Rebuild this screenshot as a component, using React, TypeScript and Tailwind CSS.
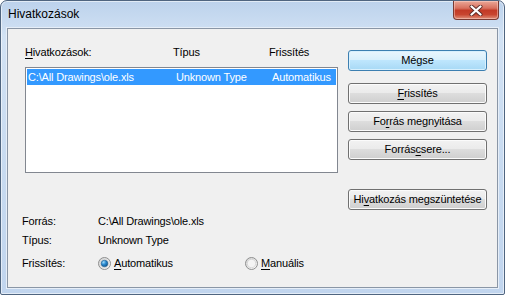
import type { ReactNode } from "react";

// mnemonic letter (underlined access key)
const U = ({ children }: { children: ReactNode }) => (
  <span className="underline underline-offset-[2px] decoration-[1px]">{children}</span>
);

function WinButton({ children, focused }: { children: ReactNode; focused?: boolean }) {
  return (
    <div
      className={
        focused
          ? "h-[21px] w-[139px] rounded-[3px] border border-[#3c7fb1] bg-[linear-gradient(#eaf6fd_0%,#d9f0fc_45%,#bee6fd_50%,#a7d9f5_100%)] shadow-[inset_0_0_0_1px_#d8f0fd] flex items-center justify-center text-black"
          : "h-[21px] w-[139px] rounded-[3px] border border-[#707070] bg-[linear-gradient(#f2f2f2_0%,#ebebeb_45%,#dddddd_50%,#cfcfcf_100%)] shadow-[inset_0_0_0_1px_#fbfbfb] flex items-center justify-center text-black"
      }
    >
      {children}
    </div>
  );
}

function Radio({ checked }: { checked?: boolean }) {
  return (
    <svg width="13" height="13" viewBox="0 0 13 13" className="shrink-0">
      <defs>
        <linearGradient id="ring" x1="0" y1="0" x2="1" y2="1">
          <stop offset="0" stopColor="#d2d2d2" />
          <stop offset="1" stopColor="#fbfbfb" />
        </linearGradient>
        <radialGradient id="dot" cx="0.35" cy="0.3" r="0.8">
          <stop offset="0" stopColor="#9fdcfa" />
          <stop offset="0.45" stopColor="#2b8ad0" />
          <stop offset="1" stopColor="#0d4f86" />
        </radialGradient>
      </defs>
      <circle cx="6.5" cy="6.5" r="6" fill="url(#ring)" stroke="#8e8f8f" strokeWidth="1" />
      <circle cx="6.5" cy="6.5" r="4.2" fill="#f4f4f4" stroke="#c9c9c9" strokeWidth="0.6" />
      {checked && <circle cx="6.5" cy="6.5" r="3.3" fill="url(#dot)" stroke="#1b5b8c" strokeWidth="0.6" />}
    </svg>
  );
}

export default function App() {
  return (
    <div className="w-[505px] h-[295px] [font-family:'Liberation_Sans',Arial,sans-serif] text-[11px] leading-[13px] tracking-[-0.15px] text-black">
      <div className="relative w-full h-full rounded-t-[7px] rounded-b-[2px] border border-[#4f6580] bg-[linear-gradient(#bcd2ec_0%,#d2e2f4_12%,#c7daf0_60%,#c1d5ee_100%)] shadow-[inset_0_0_0_1px_rgba(255,255,255,0.55)]">
        {/* title bar */}
        <div className="h-[27px] flex items-center pl-[7px] text-[12px] tracking-normal text-black">Hivatkozások</div>

        {/* close button */}
        <div className="absolute top-0 right-[5px] w-[46px] h-[19px] rounded-b-[4px] border border-t-0 border-[#7a3a32] bg-[linear-gradient(#eaa898_0%,#d8705e_40%,#c23a26_52%,#c8452f_75%,#e0907a_100%)] shadow-[inset_0_0_0_1px_rgba(255,220,210,0.45)] flex items-center justify-center">
          <svg width="14" height="11" viewBox="0 0 14 11">
            <path d="M2.5 1.5 L11.5 9.5 M11.5 1.5 L2.5 9.5" stroke="#5a2a26" strokeWidth="4" strokeLinecap="round" />
            <path d="M2.5 1.5 L11.5 9.5 M11.5 1.5 L2.5 9.5" stroke="#ffffff" strokeWidth="2.3" strokeLinecap="round" />
          </svg>
        </div>

        {/* client area */}
        <div className="mx-[6px] h-[260px] border border-[#8a96a6] bg-[#f0f0f0] shadow-[0_0_0_1px_#e6eef8]">
          <div className="flex items-start">
            {/* links list */}
            <div className="ml-[17px] mt-[17px]">
              <div className="flex h-[13px]">
                <div className="w-[148px]">
                  <U>H</U>ivatkozások:
                </div>
                <div className="w-[96px]">Típus</div>
                <div>Frissítés</div>
              </div>
              <div className="mt-[8px] w-[313px] h-[106px] border border-[#828790] bg-white p-[1px]">
                <div className="h-[16px] bg-[#3399ff] text-white flex items-center pl-[1px]">
                  <div className="w-[148px]">C:\All Drawings\ole.xls</div>
                  <div className="w-[96px]">Unknown Type</div>
                  <div>Automatikus</div>
                </div>
              </div>
            </div>

            {/* buttons */}
            <div className="ml-[10px] mt-[21px] flex flex-col">
              <WinButton focused>Mégse</WinButton>
              <div className="mt-[12px]">
                <WinButton>
                  <span>
                    <U>F</U>rissítés
                  </span>
                </WinButton>
              </div>
              <div className="mt-[7px]">
                <WinButton>
                  <span>
                    Fo<U>r</U>rás megnyitása
                  </span>
                </WinButton>
              </div>
              <div className="mt-[7px]">
                <WinButton>
                  <span>
                    Forrás<U>c</U>sere...
                  </span>
                </WinButton>
              </div>
              <div className="mt-[29px]">
                <WinButton>
                  <span>
                    Hi<U>v</U>atkozás megszüntetése
                  </span>
                </WinButton>
              </div>
            </div>
          </div>

          {/* details */}
          <div className="ml-[14px] mt-[5px]">
            <div className="flex h-[13px]">
              <div className="w-[76px]">Forrás:</div>
              <div>C:\All Drawings\ole.xls</div>
            </div>
            <div className="flex h-[13px] mt-[6px]">
              <div className="w-[76px]">Típus:</div>
              <div>Unknown Type</div>
            </div>
            <div className="flex items-center h-[16px] mt-[8px]">
              <div className="w-[76px]">Frissítés:</div>
              <div className="w-[147px] flex items-center">
                <Radio checked />
                <span className="ml-[3px]">
                  <U>A</U>utomatikus
                </span>
              </div>
              <div className="flex items-center">
                <Radio />
                <span className="ml-[3px]">
                  <U>M</U>anuális
                </span>
              </div>
            </div>
          </div>
        </div>
      </div>
    </div>
  );
}
